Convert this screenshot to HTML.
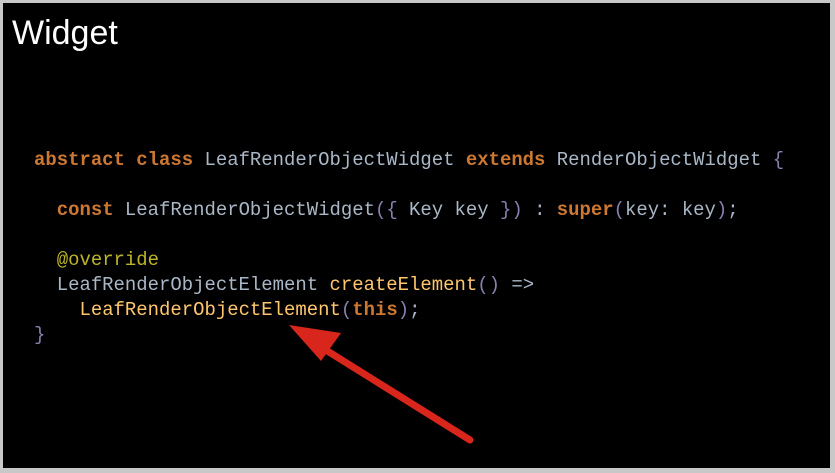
<!DOCTYPE html>
<html><head><style>
html,body{margin:0;padding:0;background:#c8c8c8;}
.s{position:absolute;left:3px;top:3px;width:827px;height:465px;background:#000;overflow:hidden;}
body{width:835px;height:473px;position:relative;overflow:hidden;}
h1{position:absolute;left:9px;top:11px;margin:0;font:400 34px "Liberation Sans",sans-serif;color:#fff;}
pre{position:absolute;left:31px;top:145px;margin:0;font:18.95px/25px "Liberation Mono",monospace;color:#a9b7c6;}
.k{color:#cc7832;font-weight:bold}.y{color:#ffc66d}.a{color:#bbb529}.p{color:#8a7fb0}
</style></head><body><div class="s">
<h1>Widget</h1>
<pre><span class="k">abstract class</span> LeafRenderObjectWidget <span class="k">extends</span> RenderObjectWidget <span class="p">{</span>

  <span class="k">const</span> LeafRenderObjectWidget<span class="p">({</span> Key key <span class="p">})</span> : <span class="k">super</span><span class="p">(</span>key: key<span class="p">)</span>;

  <span class="a">@override</span>
  LeafRenderObjectElement <span class="y">createElement</span><span class="p">()</span> =>
    <span class="y">LeafRenderObjectElement</span><span class="p">(</span><span class="k">this</span><span class="p">)</span>;
<span class="p">}</span></pre>
<svg width="827" height="465" style="position:absolute;left:0;top:0">
<line x1="467" y1="437" x2="318" y2="344" stroke="#d8261c" stroke-width="7" stroke-linecap="round"/>
<polygon points="286,322 338,330 318,358" fill="#d8261c"/>
</svg>
</div></body></html>
